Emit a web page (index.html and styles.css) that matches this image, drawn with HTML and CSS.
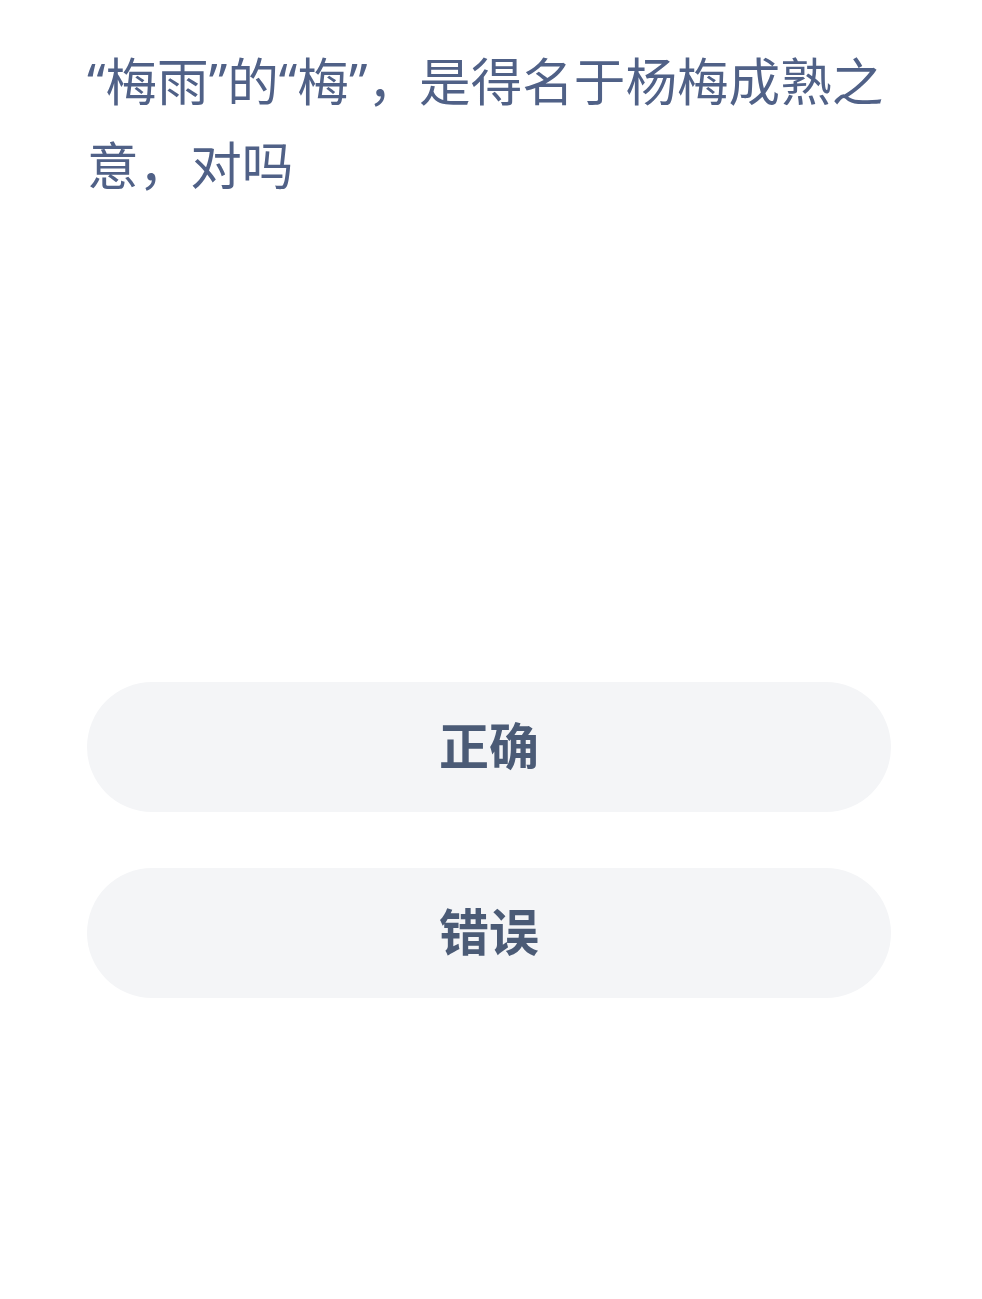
FILE: index.html
```html
<!DOCTYPE html>
<html lang="zh-CN">
<head>
<meta charset="utf-8">
<link rel="stylesheet" href="styles.css">
</head>
<body>
<main class="quiz">
  <p class="question">“梅雨”的“梅”，是得名于杨梅成熟之意，对吗</p>
  <div class="options">
    <button class="option">正确</button>
    <button class="option">错误</button>
  </div>
</main>
</body>
</html>
```
FILE: styles.css
```css
html, body {
  margin: 0;
  padding: 0;
  background: #ffffff;
}
.quiz {
  padding: 39px 91px 0 87px;
  font-family: "Noto Sans CJK SC", "Noto Sans", sans-serif;
}
.question {
  margin: 0;
  font-family: "Noto Sans", "Noto Sans CJK SC", sans-serif;
  font-size: 51.6px;
  line-height: 84px;
  color: #506187;
  font-weight: 400;
}
.options {
  margin-top: 475px;
  display: flex;
  flex-direction: column;
  gap: 56px;
}
.option {
  display: block;
  width: 100%;
  height: 130px;
  border: none;
  border-radius: 65px;
  background: #f4f5f7;
  font-family: "Noto Sans CJK SC", "Noto Sans", sans-serif;
  font-size: 50px;
  font-weight: 700;
  color: #4b5b76;
  padding: 0 0 8px 0;
}
```
